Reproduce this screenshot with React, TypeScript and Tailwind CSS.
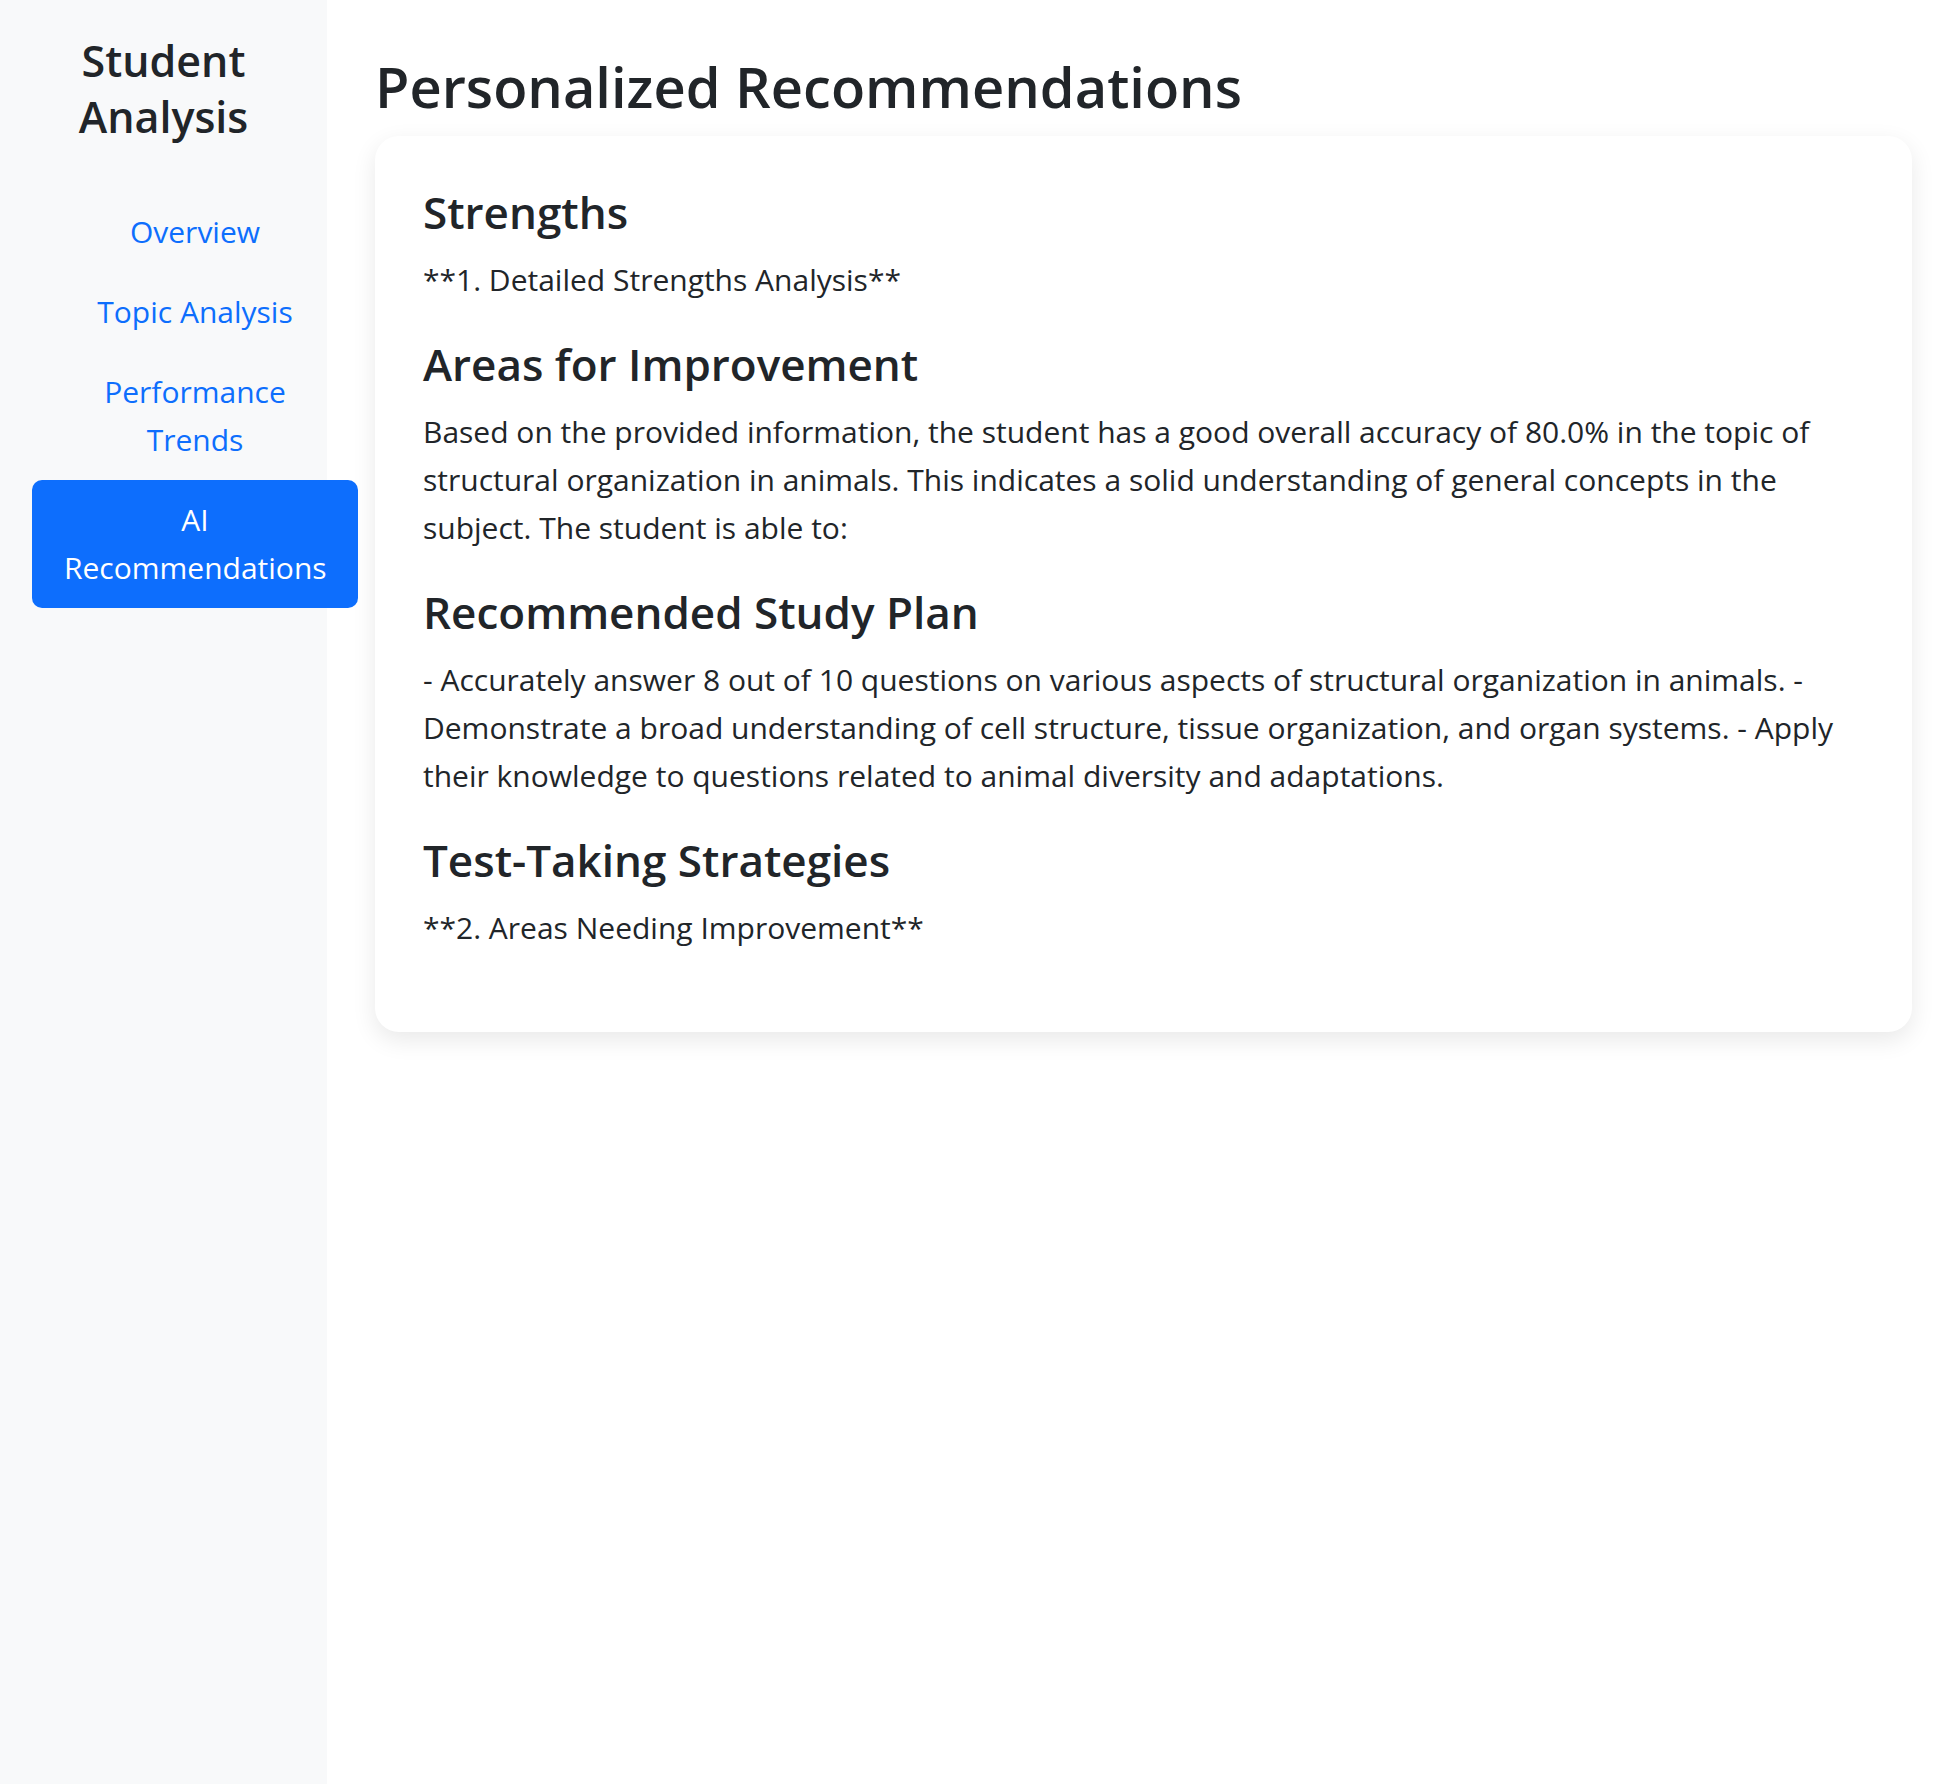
import React from "react";

interface Section {
  title: string;
  body: string;
}

const sections: Section[] = [
  { title: "Strengths", body: "**1. Detailed Strengths Analysis**" },
  {
    title: "Areas for Improvement",
    body: "Based on the provided information, the student has a good overall accuracy of 80.0% in the topic of structural organization in animals. This indicates a solid understanding of general concepts in the subject. The student is able to:",
  },
  {
    title: "Recommended Study Plan",
    body: "- Accurately answer 8 out of 10 questions on various aspects of structural organization in animals. - Demonstrate a broad understanding of cell structure, tissue organization, and organ systems. - Apply their knowledge to questions related to animal diversity and adaptations.",
  },
  { title: "Test-Taking Strategies", body: "**2. Areas Needing Improvement**" },
];

const navItems = ["Overview", "Topic Analysis", "Performance Trends", "AI Recommendations"];

const App: React.FC = () => {
  return (
    <div className="flex min-h-screen bg-white font-['Open_Sans',sans-serif] text-[#212529]">
      <aside className="relative z-10 w-[327px] shrink-0 bg-[#f8f9fa] pt-[33px]">
        <h4 className="mb-[47px] px-[24px] text-center text-[43px] font-semibold leading-[56px]">
          Student Analysis
        </h4>
        <nav className="ml-[32px] flex w-[326px] flex-col">
          {navItems.map((item) => {
            const active = item === "AI Recommendations";
            return (
              <a
                key={item}
                href="#"
                className={
                  active
                    ? "rounded-[10px] bg-[#0d6efd] px-[32px] py-[16px] text-center text-[30px] leading-[48px] text-white"
                    : "px-[32px] py-[16px] text-center text-[30px] leading-[48px] text-[#0d6efd]"
                }
              >
                {active ? (
                  <>
                    AI
                    <br />
                    Recommendations
                  </>
                ) : (
                  item
                )}
              </a>
            );
          })}
        </nav>
      </aside>

      <main className="flex-1 px-[48px] pt-[50px]">
        <h2 className="mb-[14px] text-[56px] font-semibold leading-[72px]">
          Personalized Recommendations
        </h2>
        <div className="rounded-[24px] bg-white p-[48px] shadow-[0_8px_24px_rgba(0,0,0,0.09)]">
          {sections.map((s) => (
            <div key={s.title}>
              <h4 className="mb-[16px] text-[44px] font-semibold leading-[56px]">{s.title}</h4>
              <p className="mb-[32px] text-[30px] leading-[48px]">{s.body}</p>
            </div>
          ))}
        </div>
      </main>
    </div>
  );
};

export default App;
